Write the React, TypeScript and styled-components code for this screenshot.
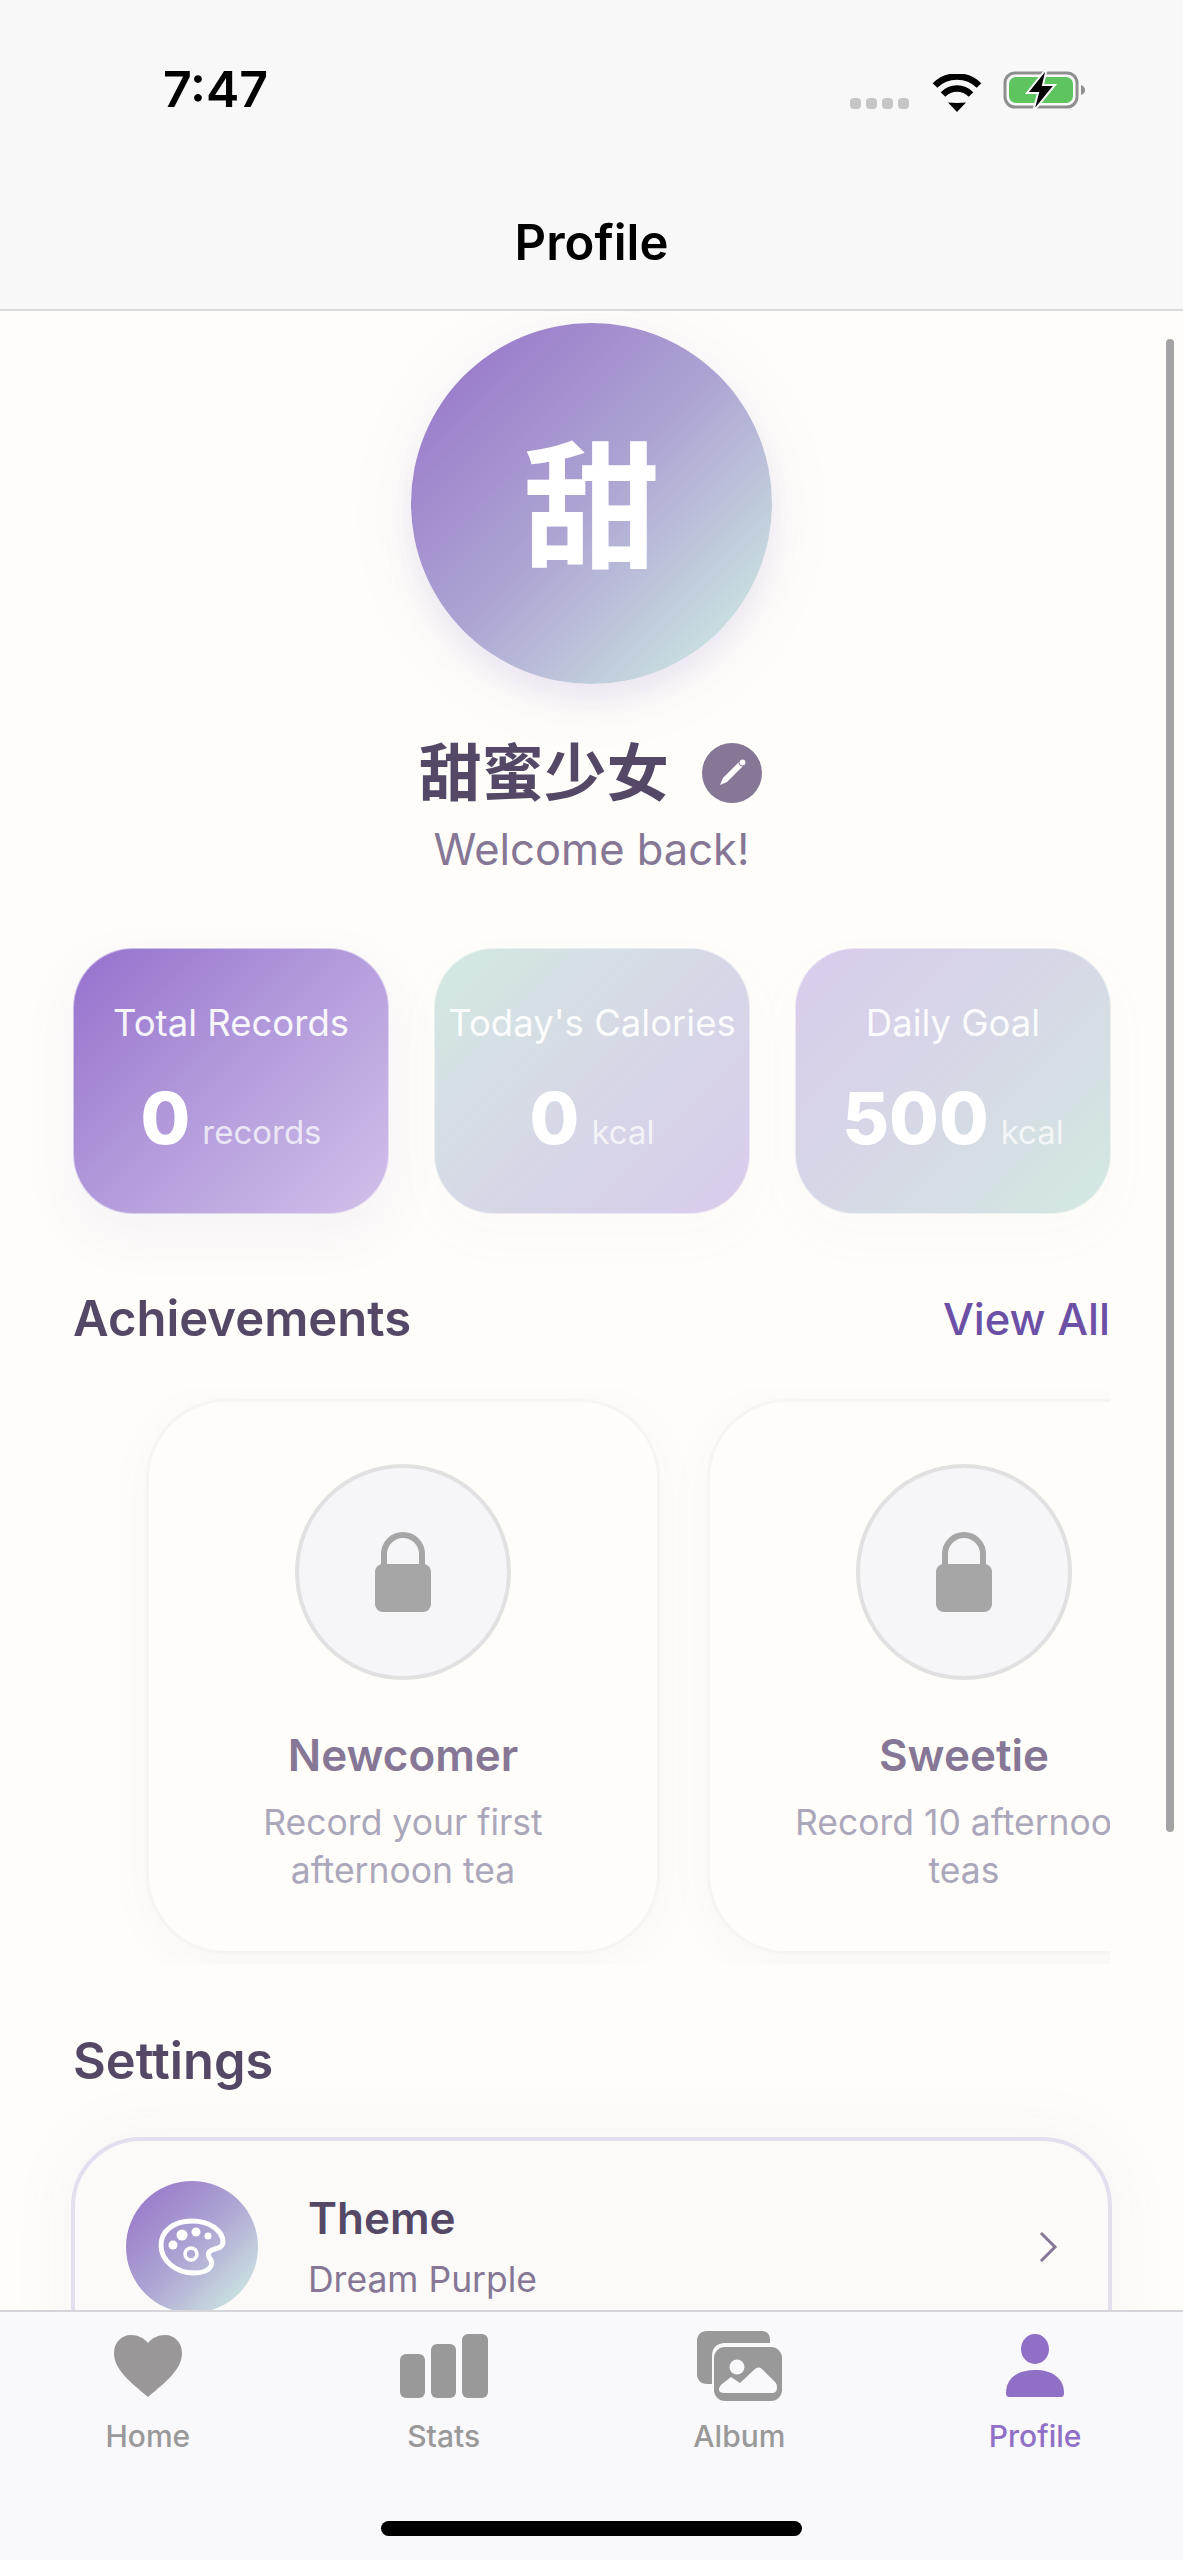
import React from "react";
import styled, { createGlobalStyle } from "styled-components";

const GlobalStyle = createGlobalStyle`
  html, body {
    margin: 0;
    padding: 0;
    background: #fefdfa;
  }
  * {
    box-sizing: border-box;
  }
`;

const stats = [
  { label: "Total Records", value: "0", unit: "records", tone: "primary" },
  { label: "Today's Calories", value: "0", unit: "kcal", tone: "mint" },
  { label: "Daily Goal", value: "500", unit: "kcal", tone: "lilac" },
];

const achievements = [
  { name: "Newcomer", desc: "Record your first afternoon tea" },
  { name: "Sweetie", desc: "Record 10 afternoon teas" },
];

const LockIcon = () => (
  <svg width="56" height="80" viewBox="0 0 56 80">
    <path d="M9 36V22a19 19 0 0 1 38 0v14" fill="none" stroke="#a6a6a6" strokeWidth="6" />
    <rect x="0" y="32" width="56" height="48" rx="8" fill="#a6a6a6" />
  </svg>
);

const App = () => {
  return (
    <Page>
      <GlobalStyle />
      <Header>
        <StatusBar>
          <Clock>7:47</Clock>
          <StatusIcons>
            <Dots>
              <i />
              <i />
              <i />
              <i />
            </Dots>
            <svg width="50" height="38" viewBox="0 0 50 38">
              <path d="M25 29l-9 -0.5 9 9.500 9-9.500z" fill="#000" />
              <path d="M11 20.500c8-8 20-8 28 0" fill="none" stroke="#000" strokeWidth="6.500" />
              <path d="M3 11.500c12-12 32-12 44 0" fill="none" stroke="#000" strokeWidth="6.500" />
            </svg>
            <svg width="84" height="44" viewBox="0 0 84 44">
              <rect x="2" y="5" width="72" height="34" rx="10" fill="none" stroke="#8f8f8f" strokeWidth="3" />
              <rect x="6" y="9" width="64" height="26" rx="7" fill="#5ec45f" />
              <path d="M78 17c3 1 4 3 4 5s-1 4-4 5z" fill="#8f8f8f" />
              <path d="M44 0L24 25h11l-5 19 22-27H40z" fill="#000" stroke="#f8f7f8" strokeWidth="2" />
            </svg>
          </StatusIcons>
        </StatusBar>
        <Title>Profile</Title>
      </Header>

      <Content>
        <ProfileBlock>
          <Avatar>甜</Avatar>
          <NameRow>
            <Name>甜蜜少女</Name>
            <EditButton>
              <svg width="36" height="36" viewBox="0 0 36 36">
                <path d="M6 30l3-7L25 7l4 4-16 16z" fill="#fff" />
                <circle cx="28.500" cy="7.500" r="3.500" fill="#fff" stroke="#857795" strokeWidth="1" />
              </svg>
            </EditButton>
          </NameRow>
          <Welcome>Welcome back!</Welcome>
        </ProfileBlock>

        <StatsRow>
          {stats.map((s) => (
            <StatCard key={s.label} $tone={s.tone}>
              <StatLabel>{s.label}</StatLabel>
              <StatValueRow>
                <StatValue>{s.value}</StatValue>
                <StatUnit>{s.unit}</StatUnit>
              </StatValueRow>
            </StatCard>
          ))}
        </StatsRow>

        <SectionHead>
          <SectionTitle>Achievements</SectionTitle>
          <ViewAll>View All</ViewAll>
        </SectionHead>

        <AchievementTrack>
          {achievements.map((a) => (
            <AchievementCard key={a.name}>
              <LockCircle>
                <LockIcon />
              </LockCircle>
              <AchievementName>{a.name}</AchievementName>
              <AchievementDesc>{a.desc}</AchievementDesc>
            </AchievementCard>
          ))}
        </AchievementTrack>

        <SettingsTitle>Settings</SettingsTitle>
        <SettingsCard>
          <SettingsRow>
            <SettingIcon>
              <svg width="68" height="58" viewBox="0 0 68 58">
                <path
                  d="M34 3C16 3 3 13 3 27c0 15 14 28 33 28 9 0 15-3 17-7 2-3 0-6-2-9-2-4 1-7 6-8 5-1 8-3 8-7C65 13 52 3 34 3z"
                  fill="none"
                  stroke="#fff"
                  strokeWidth="5"
                />
                <circle cx="15" cy="27" r="4.500" fill="#fff" />
                <circle cx="24" cy="17" r="5.500" fill="#fff" />
                <circle cx="38" cy="14" r="4.500" fill="#fff" />
                <circle cx="50" cy="18" r="3.500" fill="#fff" />
                <circle cx="33" cy="36" r="6" fill="none" stroke="#fff" strokeWidth="3.500" />
              </svg>
            </SettingIcon>
            <SettingText>
              <SettingName>Theme</SettingName>
              <SettingValue>Dream Purple</SettingValue>
            </SettingText>
            <svg width="20" height="32" viewBox="0 0 20 32">
              <path d="M3 2l14 14L3 30" fill="none" stroke="#857795" strokeWidth="3" />
            </svg>
          </SettingsRow>
        </SettingsCard>
        <ScrollThumb />
      </Content>

      <TabBar>
        <Tab>
          <TabIcon>
            <svg width="70" height="64" viewBox="0 0 70 64">
              <path
                d="M35 63C16 47 1 35 1 19 1 8 9 1 18 1c7 0 13 3 17 8 4-5 10-8 17-8 9 0 17 7 17 18 0 16-15 28-34 44z"
                fill="#9a9799"
              />
            </svg>
          </TabIcon>
          <TabLabel>Home</TabLabel>
        </Tab>
        <Tab>
          <TabIcon>
            <svg width="88" height="64" viewBox="0 0 88 64">
              <rect x="0" y="20" width="25" height="44" rx="6" fill="#999" />
              <rect x="31" y="10" width="25" height="54" rx="6" fill="#999" />
              <rect x="62" y="0" width="26" height="64" rx="6" fill="#999" />
            </svg>
          </TabIcon>
          <TabLabel>Stats</TabLabel>
        </Tab>
        <Tab>
          <TabIcon>
            <svg width="88" height="72" viewBox="0 0 88 72">
              <path d="M12 1h54c6 0 9 3 9 9v3H30c-8 0-13 5-13 13v28h-5c-6 0-10-4-10-10V11C2 5 6 1 12 1z" fill="#999" />
              <rect x="19" y="17" width="68" height="54" rx="11" fill="#999" />
              <circle cx="42" cy="37" r="7.500" fill="#f9f8fa" />
              <path
                d="M24 60c0-3 1-4 3-6l9-7 9 6 15-14c3-2 5-2 7 0l13 13c2 2 2 4 2 6 0 3-2 5-5 5H30c-4 0-6-1-6-3z"
                fill="#f9f8fa"
              />
            </svg>
          </TabIcon>
          <TabLabel>Album</TabLabel>
        </Tab>
        <Tab $active>
          <TabIcon>
            <svg width="60" height="64" viewBox="0 0 60 64">
              <ellipse cx="30" cy="15" rx="14" ry="15" fill="#8f70c6" />
              <path d="M1 59C1 44 13 36 30 36s29 8 29 23c0 3-1 4-4 4H5c-3 0-4-1-4-4z" fill="#8f70c6" />
            </svg>
          </TabIcon>
          <TabLabel>Profile</TabLabel>
        </Tab>
        <HomeIndicator />
      </TabBar>
    </Page>
  );
};

export default App;

const sansStack = `Inter, "Noto Sans CJK SC", sans-serif`;
const avatarGradient = "linear-gradient(135deg, #9a7ccb 12%, #aea5d3 50%, #c9dee0 86%)";

const Page = styled.div`
  width: 1183px;
  height: 2560px;
  display: flex;
  flex-direction: column;
  overflow: hidden;
  background: #fefdfa;
  font-family: ${sansStack};
`;

const Header = styled.header`
  height: 311px;
  flex-shrink: 0;
  background: #f9f8f8;
  border-bottom: 2px solid #d9d8dc;
`;

const StatusBar = styled.div`
  height: 196px;
  padding: 66px 0 0 163px;
  display: flex;
  justify-content: space-between;
  align-items: flex-start;
`;

const Clock = styled.div`
  font-size: 50px;
  line-height: 46px;
  font-weight: 600;
  color: #000;
`;

const StatusIcons = styled.div`
  display: flex;
  align-items: flex-end;
  gap: 22px;
  padding-right: 96px;
  padding-top: 2px;

  svg:last-child {
    margin-left: -1px;
  }
`;

const Dots = styled.div`
  display: flex;
  gap: 5px;
  margin-bottom: 3px;
  margin-right: 1px;

  i {
    width: 11px;
    height: 11px;
    border-radius: 4px;
    background: #c6c6c8;
  }
`;

const Title = styled.h1`
  margin: 0;
  text-align: center;
  font-size: 49px;
  line-height: 94px;
  font-weight: 600;
  color: #000;
`;

const Content = styled.main`
  position: relative;
  flex: 1;
  min-height: 0;
  overflow: hidden;
  padding: 12px 73px 0;
`;

const ProfileBlock = styled.section`
  display: flex;
  flex-direction: column;
  align-items: center;
`;

const Avatar = styled.div`
  width: 361px;
  height: 361px;
  border-radius: 50%;
  display: flex;
  align-items: center;
  justify-content: center;
  padding-bottom: 12px;
  background: ${avatarGradient};
  box-shadow: 0 16px 28px rgba(150, 115, 205, 0.13), 0 10px 60px 14px rgba(150, 115, 205, 0.05);
  color: #fff;
  font-size: 136px;
  font-weight: 700;
`;

const NameRow = styled.div`
  margin-top: 56px;
  display: flex;
  align-items: center;
  gap: 33px;
  height: 66px;
  margin-left: -2px;
`;

const Name = styled.div`
  font-size: 62.500px;
  font-weight: 700;
  line-height: 66px;
  color: #544866;
`;

const EditButton = styled.div`
  width: 60px;
  height: 60px;
  border-radius: 50%;
  background: #857795;
  display: flex;
  align-items: center;
  justify-content: center;
`;

const Welcome = styled.div`
  margin-top: 16px;
  font-size: 43.500px;
  line-height: 54px;
  color: #857795;
`;

const statBackgrounds: Record<string, string> = {
  primary: "linear-gradient(135deg, #9571cd 0%, #b49cdc 50%, #d2c1ea 100%)",
  mint: "linear-gradient(135deg, #d3e9e1 0%, #d6d8e6 50%, #d9cbec 100%)",
  lilac: "linear-gradient(135deg, #d9cbec 0%, #d6d8e6 50%, #d3e9e1 100%)",
};

const StatsRow = styled.section`
  margin-top: 72px;
  display: grid;
  grid-template-columns: repeat(3, 316px);
  column-gap: 45px;
`;

const StatCard = styled.div<{ $tone: string }>`
  height: 266px;
  border-radius: 60px;
  border: 1px solid rgba(255, 255, 255, 0.5);
  background: ${(p) => statBackgrounds[p.$tone]};
  background-origin: border-box;
  box-shadow: ${(p) =>
    p.$tone === "primary"
      ? "0 20px 40px 12px rgba(150, 115, 205, 0.06)"
      : "0 20px 40px 10px rgba(150, 150, 190, 0.025)"};
  display: flex;
  flex-direction: column;
  align-items: center;
  padding-top: 52px;
  color: #fff;
`;

const StatLabel = styled.div`
  font-size: 36.500px;
  line-height: 44px;
  white-space: nowrap;
  opacity: 0.92;
`;

const StatValueRow = styled.div`
  margin-top: 35px;
  display: flex;
  align-items: baseline;
  gap: 12px;
`;

const StatValue = styled.span`
  font-size: 72px;
  line-height: 76px;
  font-weight: 800;
`;

const StatUnit = styled.span`
  font-size: 33px;
  opacity: 0.72;
`;

const SectionHead = styled.div`
  margin-top: 75px;
  height: 60px;
  display: flex;
  align-items: center;
  justify-content: space-between;
`;

const SectionTitle = styled.h2`
  margin: 0;
  font-size: 49px;
  line-height: 60px;
  font-weight: 600;
  color: #544866;
`;

const ViewAll = styled.span`
  font-size: 43.500px;
  font-weight: 500;
  color: #6c50a6;
`;

const AchievementTrack = styled.section`
  margin-top: 40px;
  height: 575px;
  overflow: hidden;
  padding: 10px 0 0 73px;
  display: flex;
  gap: 47px;
`;

const AchievementCard = styled.article`
  flex: 0 0 514px;
  height: 555px;
  border-radius: 80px;
  border: 3px solid #f6f5f4;
  background: #fefdfa;
  box-shadow: 0 8px 40px rgba(130, 110, 170, 0.05);
  display: flex;
  flex-direction: column;
  align-items: center;
  padding-top: 62px;
`;

const LockCircle = styled.div`
  width: 216px;
  height: 216px;
  flex-shrink: 0;
  border-radius: 50%;
  border: 4px solid #e2e1e2;
  background: #f6f5f8;
  display: flex;
  align-items: center;
  justify-content: center;
`;

const AchievementName = styled.div`
  margin-top: 49px;
  font-size: 44px;
  line-height: 52px;
  font-weight: 600;
  color: #857795;
`;

const AchievementDesc = styled.div`
  margin-top: 18px;
  width: 400px;
  flex-shrink: 0;
  text-align: center;
  font-size: 35.500px;
  line-height: 48px;
  color: #aba7bb;
`;

const SettingsTitle = styled.h2`
  margin: 67px 0 0;
  font-size: 50.500px;
  line-height: 60px;
  font-weight: 600;
  color: #544866;
`;

const SettingsCard = styled.section`
  margin: 46px -2px 0;
  height: 400px;
  border-radius: 70px;
  border: 4px solid #e4deef;
  background: #fbfaf8;
  box-shadow: 0 0 50px 20px rgba(120, 110, 150, 0.035);
`;

const SettingsRow = styled.div`
  padding: 40px 50px 0 51px;
  display: flex;
  align-items: center;
`;

const SettingIcon = styled.div`
  width: 132px;
  height: 132px;
  flex-shrink: 0;
  border-radius: 50%;
  background: ${avatarGradient};
  display: flex;
  align-items: center;
  justify-content: center;
`;

const SettingText = styled.div`
  flex: 1;
  margin-left: 50px;
`;

const SettingName = styled.div`
  font-size: 44px;
  line-height: 52px;
  font-weight: 600;
  color: #544866;
`;

const SettingValue = styled.div`
  margin-top: 13px;
  font-size: 35.500px;
  line-height: 46px;
  color: #857795;
`;

const ScrollThumb = styled.div`
  position: absolute;
  top: 28px;
  right: 9px;
  width: 8px;
  height: 1493px;
  border-radius: 4px;
  background: #a3a3a3;
`;

const TabBar = styled.nav`
  position: relative;
  flex-shrink: 0;
  height: 250px;
  background: #f9f8fa;
  border-top: 2px solid #d6d5d9;
  display: grid;
  grid-template-columns: repeat(4, 1fr);
  align-items: start;
`;

const Tab = styled.div<{ $active?: boolean }>`
  display: flex;
  flex-direction: column;
  align-items: center;
  color: ${(p) => (p.$active ? "#8f70c6" : "#999")};
`;

const TabIcon = styled.div`
  height: 106px;
  display: flex;
  align-items: center;
  padding-top: 2px;
`;

const TabLabel = styled.div`
  font-size: 30px;
  line-height: 36px;
  font-weight: 500;
`;

const HomeIndicator = styled.div`
  position: absolute;
  left: 381px;
  bottom: 24px;
  width: 421px;
  height: 15px;
  border-radius: 8px;
  background: #000;
`;
